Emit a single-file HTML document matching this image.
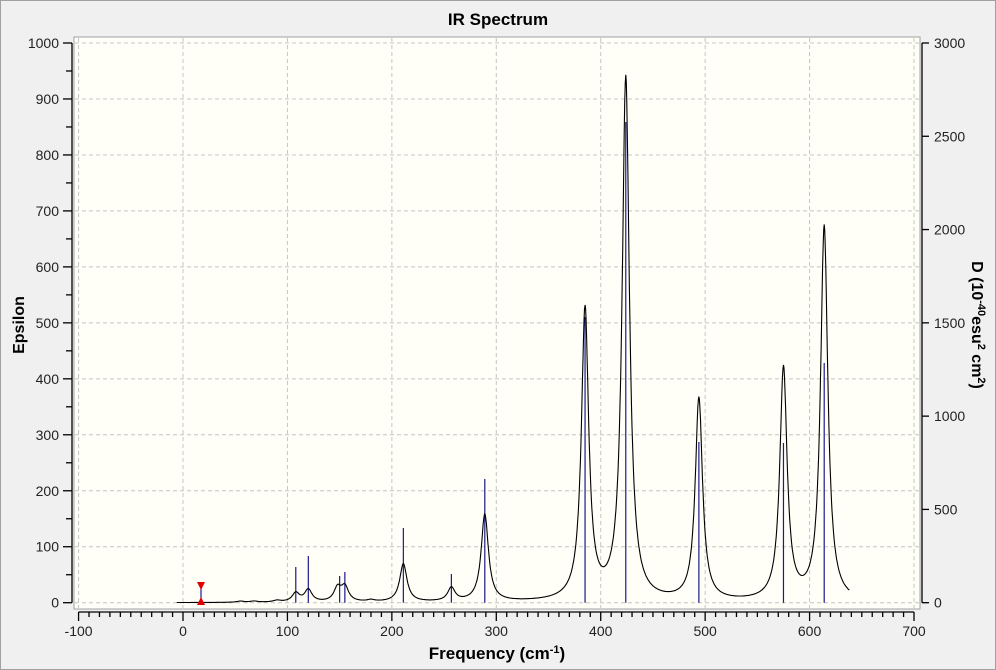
<!DOCTYPE html>
<html><head><meta charset="utf-8"><style>
html,body{margin:0;padding:0;background:#f0f0f0;}
#w{position:relative;width:994px;height:668px;border:1px solid #a0a0a0;background:#f0f0f0;overflow:hidden;font-family:"Liberation Sans",sans-serif;}
</style></head><body><div id="w">
<svg id="s" width="994" height="668" viewBox="1 1 994 668" xmlns="http://www.w3.org/2000/svg" font-family="Liberation Sans, sans-serif">
<rect x="74" y="37" width="846" height="572" fill="#fffff8" stroke="#a0a0a0" stroke-width="1"/>
<g id="grid" stroke="#c4c4c4" stroke-dasharray="4,3" stroke-width="1"></g>
<g id="ax" stroke="#000" stroke-width="1.3"></g>
<g id="lab" font-size="14" fill="#222"></g>
<g id="sticks" stroke="#1a1a8c" stroke-width="1.2"></g>
<path id="curve" fill="none" stroke="#000" stroke-width="1.1"/>
<line x1="201" y1="586" x2="201" y2="601" stroke="#1a1a8c" stroke-width="1.2"/>
<polygon points="197,582 205,582 201,590" fill="#e00000"/>
<polygon points="197,605 205,605 201,597" fill="#e00000"/>
<text x="498" y="25" text-anchor="middle" font-size="17" font-weight="bold">IR Spectrum</text>
<text transform="translate(24,325) rotate(-90)" text-anchor="middle" font-size="16" font-weight="bold">Epsilon</text>
<text transform="translate(972,325) rotate(90)" text-anchor="middle" font-size="16" font-weight="bold">D (10<tspan dy="-6" font-size="11">-40</tspan><tspan dy="6">esu</tspan><tspan dy="-6" font-size="11">2</tspan><tspan dy="6"> cm</tspan><tspan dy="-6" font-size="11">2</tspan><tspan dy="6">)</tspan></text>
<text x="497" y="659" text-anchor="middle" font-size="17" font-weight="bold">Frequency (cm<tspan dy="-6" font-size="11">-1</tspan><tspan dy="6">)</tspan></text>
</svg></div>
<script>
var NS="http://www.w3.org/2000/svg";
function X(f){return 183+f*1.0443;}
function Y(e){return 602.7-e*0.5597;}
function el(p,t,a,txt){var e=document.createElementNS(NS,t);for(var k in a)e.setAttribute(k,a[k]);if(txt!==undefined)e.textContent=txt;document.getElementById(p).appendChild(e);}
for(var f=-100;f<=700;f+=100){el("grid","line",{x1:X(f),x2:X(f),y1:38,y2:608});}
for(var e=0;e<=1000;e+=100){el("grid","line",{x1:75,x2:919,y1:Y(e),y2:Y(e)});}
el("ax","line",{x1:72,x2:72,y1:Y(1000),y2:Y(0)});
for(var e=0;e<=1000;e+=50){var m=e%100==0;el("ax","line",{x1:m?63:66,x2:72,y1:Y(e),y2:Y(e)});if(m)el("lab","text",{x:59,y:Y(e)+5,"text-anchor":"end"},e);}
el("ax","line",{x1:922,x2:922,y1:Y(1000),y2:Y(0)});
for(var d=0;d<=3000;d+=500){var yy=602.7-d*0.18657;el("ax","line",{x1:922,x2:929,y1:yy,y2:yy});el("lab","text",{x:934,y:yy+5},d);}
el("ax","line",{x1:X(-100),x2:X(700),y1:612,y2:612});
for(var f=-100;f<=700;f+=10){var m=f%100==0;el("ax","line",{x1:X(f),x2:X(f),y1:612,y2:m?621:617});if(m)el("lab","text",{x:X(f),y:636,"text-anchor":"middle"},f);}
var st=[[108,567],[120,556],[150,576],[155,572],[211,528],[257,574],[289,479],[385,317],[424,122],[494,442],[575,443],[614,363]];
st.forEach(function(s){el("sticks","line",{x1:X(s[0]),x2:X(s[0]),y1:s[1],y2:602.7});});
var pk=[[108,16],[120,22],[148,24],[155,26],[211,68],[257,24],[289,156],[385,520],[424,935],[494,362],[575,415],[614,670],[55,2],[68,2],[90,3],[180,3]];
var g=4.2,d="";
for(var f=-6;f<=638;f+=0.5){var v=0;pk.forEach(function(p){var x=f-p[0];v+=p[1]*g*g/(g*g+x*x);});d+=(d?"L":"M")+X(f).toFixed(1)+","+Y(v).toFixed(1);}
document.getElementById("curve").setAttribute("d",d);
</script>
</body></html>
